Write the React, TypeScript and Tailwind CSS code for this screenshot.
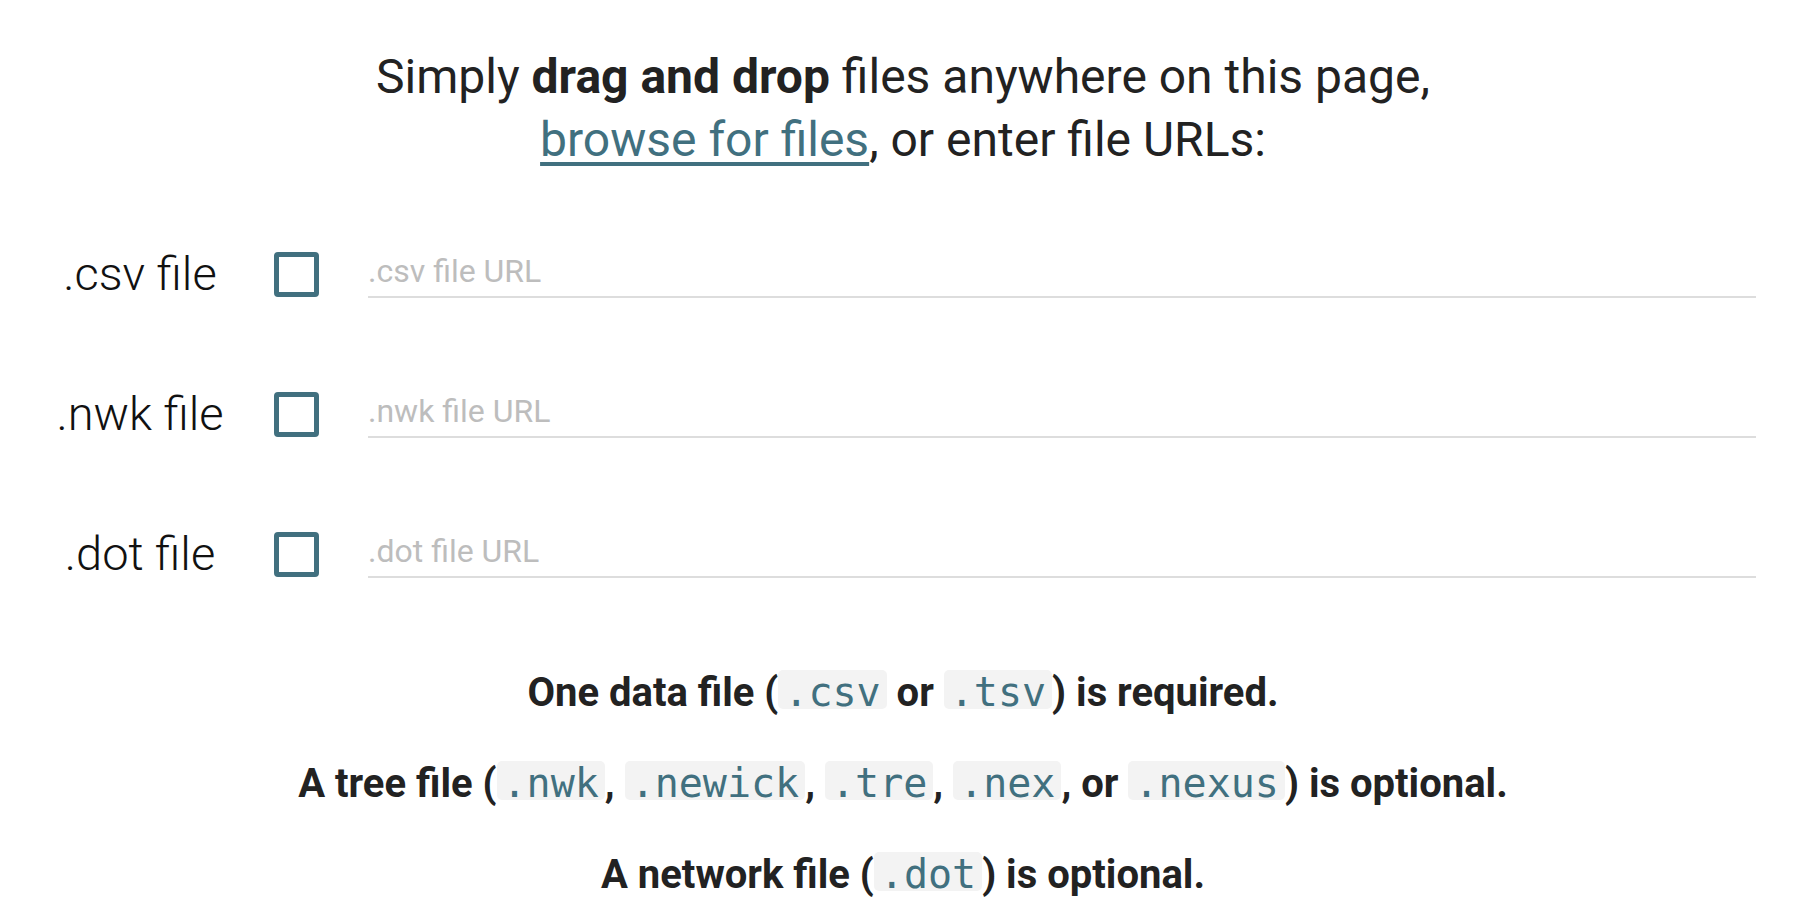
import React from 'react';

const rows = [
  { label: '.csv file', placeholder: '.csv file URL' },
  { label: '.nwk file', placeholder: '.nwk file URL' },
  { label: '.dot file', placeholder: '.dot file URL' },
];

function Code({ children }: { children: React.ReactNode }) {
  return (
    <code className="inline-block h-[39px] rounded-[5px] bg-[#f3f3f3] px-[6px] pt-[5px] font-['DejaVu_Sans_Mono',monospace] text-[40px] font-normal leading-[34px] text-[#41707f]">
      {children}
    </code>
  );
}

export default function App() {
  return (
    <div className="h-[924px] w-full overflow-hidden bg-white font-['Roboto',sans-serif] text-[#222]">
      {/* Intro */}
      <p className="pt-[45px] text-center text-[48px] leading-[63px]">
        Simply <strong className="font-bold">drag and drop</strong> files anywhere on this page,
        <br />
        <a href="#" className="text-[#41707f] underline decoration-[4px] underline-offset-[6px]">
          browse for files
        </a>
        , or enter file URLs:
      </p>

      {/* URL rows */}
      <div className="mt-[33px] flex flex-col px-[50px]">
        {rows.map((r) => (
          <div key={r.label} className="flex h-[140px] items-center">
            <label className="w-[180px] text-center text-[47px] font-light text-[#111]">
              {r.label}
            </label>
            <span className="ml-[44px] h-[45px] w-[45px] shrink-0 rounded-[4px] border-[5px] border-[#41707f]" />
            <input
              type="text"
              placeholder={r.placeholder}
              className="ml-[49px] h-[48px] flex-1 border-b-2 border-[#dddddd] bg-transparent pb-[5px] text-[32px] text-[#333] outline-none placeholder:text-[#bdbdbd]"
            />
          </div>
        ))}
      </div>

      {/* Requirements */}
      <div className="mt-[23px] text-center text-[40px] font-bold leading-[91px]">
        <p>
          One data file (<Code>.csv</Code> or <Code>.tsv</Code>) is required.
        </p>
        <p>
          A tree file (<Code>.nwk</Code>, <Code>.newick</Code>, <Code>.tre</Code>, <Code>.nex</Code>, or{' '}
          <Code>.nexus</Code>) is optional.
        </p>
        <p>
          A network file (<Code>.dot</Code>) is optional.
        </p>
      </div>
    </div>
  );
}
